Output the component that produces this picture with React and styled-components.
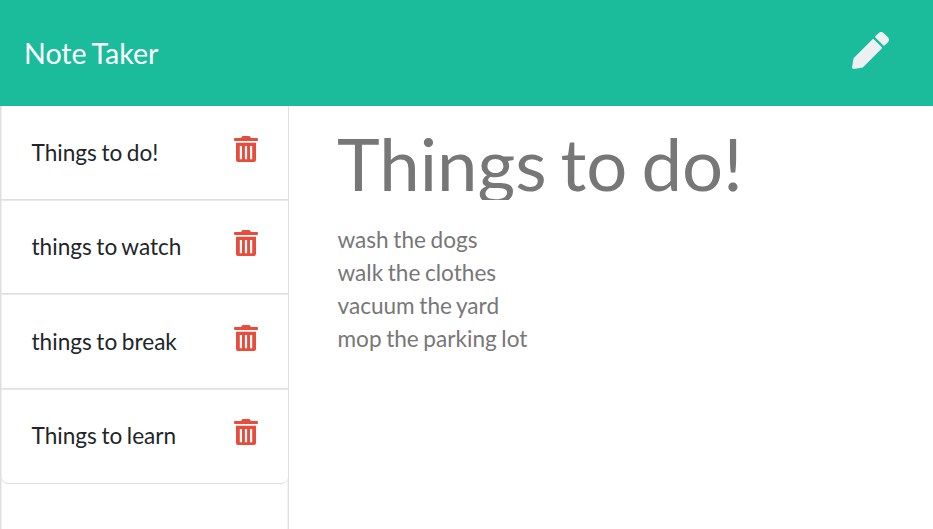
import React from "react";
import styled, { createGlobalStyle } from "styled-components";

const Global = createGlobalStyle`
  * { box-sizing: border-box; }
  body { margin: 0; background: #fff; font-family: Lato, sans-serif; font-size: 22.6px; line-height: 33px; word-spacing: -1.2px; overflow: hidden; }
`;
const Page = styled.div`height: 529px; display: flex; flex-direction: column;`;
const Header = styled.header`
  height: 106px; flex: none; background: #1abc9c; color: #fff;
  display: flex; align-items: center; justify-content: space-between; padding: 0 44px 0 24px;
`;
const Brand = styled.div`font-size: 28.6px; line-height: 42px; word-spacing: -1.7px;`;
const PenIcon = styled.svg`width: 37px; height: 37px; margin-top: -5px; fill: #ecf0f1; display: block;`;
const Main = styled.main`flex: 1; display: flex; min-height: 0;`;
const Sidebar = styled.aside`width: 289px; flex: none; border: 1px solid #dfdfdf; border-width: 0 1px; box-shadow: inset 1px 0 #efefef, inset -1px 0 #f3f3f3;`;
const List = styled.ul`
  margin: 0; padding: 0; list-style: none; height: 378px; background: #fff;
  border: solid #dfdfdf; border-width: 0 0 1px; border-radius: 0 0 7px 7px;
  box-shadow: inset 1px 0 #efefef;
`;
const Item = styled.li`
  height: ${(p) => (p.$first ? "93px" : "94.4px")};
  display: flex; justify-content: space-between; color: #212529;
  padding: ${(p) => (p.$first ? "30px" : "30.2px")} 30px 0 30.5px;
  ${(p) => !p.$first && "border-top: 1px solid #dfdfdf; box-shadow: inset 0 1px #e9e9e9;"}
`;
const TrashIcon = styled.svg`width: 24px; height: 26px; fill: #e74c3c; display: block;`;
const Note = styled.article`flex: 1; padding: 27px 0 0 48px; color: #777;`;
const Title = styled.h1`margin: 0; font-size: 72.5px; line-height: 60px; height: 67px; font-weight: 400; word-spacing: -4.6px; overflow: hidden;`;
const Body = styled.div`margin-top: 23px; padding-left: 0.5px; white-space: pre-line;`;

const notes = ["Things to do!", "things to watch", "things to break", "Things to learn"];

export default function App() {
  return (
    <Page>
      <Global />
      <Header>
        <Brand>Note Taker</Brand>
        <PenIcon viewBox="0 0 512 512"><path d="M497.9 142.1l-46.1 46.1c-4.700 4.700-12.300 4.700-17 0l-111-111c-4.700-4.700-4.700-12.300 0-17l46.100-46.100c18.700-18.700 49.100-18.700 67.900 0l60.100 60.100c18.800 18.700 18.800 49.100 0 67.900zM284.200 99.800L21.600 362.400.400 483.900c-2.900 16.400 11.400 30.600 27.800 27.800l121.500-21.300 262.600-262.600c4.700-4.700 4.700-12.300 0-17l-111-111c-4.800-4.700-12.400-4.700-17.100 0z" /></PenIcon>
      </Header>
      <Main>
        <Sidebar>
          <List>
            {notes.map((n, i) => (
              <Item key={n} $first={i === 0}>
                <span>{n}</span>
                <TrashIcon viewBox="0 0 24 26">
                  <path d="M8.500 0h7L17 2h6q1 0 1 1v1q0 1-1 1H1Q0 5 0 4V3q0-1 1-1h6z" />
                  <path fillRule="evenodd" d="M2 6.700h20V24q0 2-2 2H4q-2 0-2-2zM5.800 10v13.200h2.200V10zM10.900 10v13.200h2.200V10zM16 10v13.200h2.200V10z" />
                </TrashIcon>
              </Item>
            ))}
          </List>
        </Sidebar>
        <Note>
          <Title>Things to do!</Title>
          <Body>{"wash the dogs\nwalk the clothes\nvacuum the yard\nmop the parking lot"}</Body>
        </Note>
      </Main>
    </Page>
  );
}
